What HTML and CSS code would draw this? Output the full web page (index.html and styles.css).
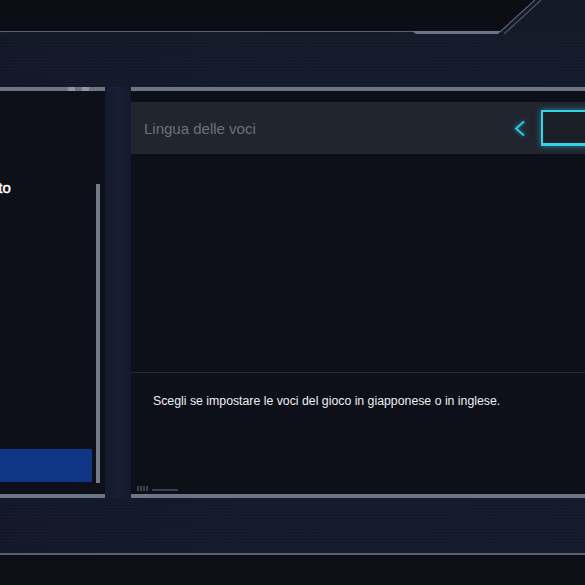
FILE: index.html
```html
<!DOCTYPE html>
<html lang="it">
<head>
    <meta charset="UTF-8">
    <meta name="viewport" content="width=device-width, initial-scale=1.0">
    <title>Impostazioni - Lingua delle voci</title>
    <link rel="stylesheet" href="styles.css">
</head>
<body>
    <div class="screen">
        <!-- cornice superiore con taglio diagonale -->
        <svg class="frame-top" width="585" height="35" viewBox="0 0 585 35">
            <rect width="585" height="35" fill="#131a28"/>
            <polygon points="0,0 537,0 502,31 0,31" fill="#0d0e15"/>
            <line x1="0" y1="31.5" x2="414" y2="31.5" stroke="#59606f" stroke-width="1"/>
            <polygon points="412,31 501,31 498,34 416,34" fill="#6b7585"/>
            <line x1="500" y1="32" x2="535" y2="0" stroke="#5a6272" stroke-width="1.2"/>
            <line x1="504" y1="34" x2="541" y2="0" stroke="#4d5465" stroke-width="1.2"/>
        </svg>

        <div class="band"></div>

        <div class="panels">
            <section class="list-panel">
                <div class="panel-edge marked"></div>
                <div class="list-body">
                    <ul class="menu">
                        <li class="menu-item">Testo</li>
                        <li class="menu-spacer"></li>
                        <li class="menu-item selected"></li>
                    </ul>
                    <div class="scrollbar"></div>
                </div>
                <div class="panel-edge"></div>
            </section>

            <div class="divider"></div>

            <section class="detail-panel">
                <div class="panel-edge"></div>
                <div class="option-row">
                    <span class="option-label">Lingua delle voci</span>
                    <svg class="chevron" width="13" height="17" viewBox="0 0 13 17">
                        <polyline points="11,1.5 3,8.5 11,15.5" fill="none" stroke="#2bc8e4" stroke-width="2"/>
                    </svg>
                    <div class="option-value"></div>
                </div>
                <div class="detail-space"></div>
                <div class="description">
                    <p>Scegli se impostare le voci del gioco in giapponese o in inglese.</p>
                    <div class="meter">
                        <span></span><span></span><span></span><span></span><span class="long"></span>
                    </div>
                </div>
                <div class="panel-edge"></div>
            </section>
        </div>

        <div class="band band-low"></div>
        <div class="rule"></div>
        <div class="footer"></div>
    </div>
</body>
</html>
```

FILE: styles.css
```css
html, body {
    margin: 0;
    padding: 0;
    background: #0e0f16;
}
body {
    font-family: "Liberation Sans", Arial, sans-serif;
    color: white;
}
.screen {
    width: 585px;
    height: 585px;
    overflow: hidden;
    display: flex;
    flex-direction: column;
    background: #131a28;
}
.frame-top {
    display: block;
    flex-shrink: 0;
}
.band {
    height: 52px;
    flex-shrink: 0;
    background:
        repeating-linear-gradient(180deg, rgba(255,255,255,0.012) 0 1px, transparent 1px 3px),
        linear-gradient(90deg, #121827, #141b2b 50%, #131a29);
}
.band-low {
    height: 55px;
}
.panels {
    height: 411px;
    flex-shrink: 0;
    display: flex;
}
.panel-edge {
    height: 4px;
    flex-shrink: 0;
    background: #6b7585;
}
.panel-edge.marked {
    background: linear-gradient(90deg, #6b7585 68px, #8d96a5 68px 75px, #6b7585 75px 82px, #8d96a5 82px 89px, #6b7585 89px);
}
.list-panel {
    width: 105px;
    flex-shrink: 0;
    display: flex;
    flex-direction: column;
    background: #0e1019;
}
.list-body {
    flex: 1;
    display: flex;
    gap: 4px;
}
.menu {
    list-style: none;
    margin: 0;
    padding: 80px 0 12px;
    width: 92px;
    display: flex;
    flex-direction: column;
    overflow: hidden;
}
.menu-item {
    height: 34px;
    line-height: 34px;
    font-size: 15px;
    text-indent: -25px;
    white-space: nowrap;
    -webkit-text-stroke: 0.4px white;
}
.menu-spacer {
    flex: 1;
}
.menu-item.selected {
    height: 33px;
    background: #0e3684;
}
.scrollbar {
    width: 4px;
    margin-top: 93px;
    height: 299px;
    background: #747c8a;
}
.divider {
    width: 26px;
    flex-shrink: 0;
    background: linear-gradient(90deg, #131a2b, #181e35 50%, #141a2c);
}
.detail-panel {
    flex: 1;
    min-width: 0;
    display: flex;
    flex-direction: column;
    background: #0e1019;
    overflow: hidden;
}
.option-row {
    margin-top: 11px;
    height: 52px;
    flex-shrink: 0;
    display: flex;
    align-items: center;
    padding-left: 13px;
    background: #21252e;
}
.option-label {
    font-size: 15px;
    color: #6c717b;
}
.chevron {
    margin-left: auto;
    margin-right: 15px;
    flex-shrink: 0;
    filter: drop-shadow(0 0 2px rgba(43, 200, 228, 0.6));
}
.option-value {
    width: 60px;
    height: 31px;
    flex-shrink: 0;
    margin-right: -20px;
    border: 2px solid #2fd3ea;
    border-bottom-width: 3px;
    background: #1a1e26;
    box-shadow: 0 0 6px rgba(47, 211, 234, 0.55);
}
.detail-space {
    height: 218px;
    flex-shrink: 0;
    border-bottom: 1px solid #262a34;
}
.description {
    flex: 1;
    display: flex;
    flex-direction: column;
    padding: 20px 0 0 22px;
}
.description p {
    margin: 0;
    font-size: 12.3px;
    line-height: 16px;
    color: #eceef2;
}
.meter {
    margin: auto 0 3px -16px;
    display: flex;
    align-items: flex-end;
    gap: 1px;
}
.meter span {
    width: 2px;
    height: 5px;
    background: #3a404c;
}
.meter .long {
    width: 26px;
    height: 2px;
    margin-left: 3px;
}
.rule {
    height: 2px;
    flex-shrink: 0;
    background: #59606f;
}
.footer {
    flex: 1;
    background: #0e0f16;
}
```
